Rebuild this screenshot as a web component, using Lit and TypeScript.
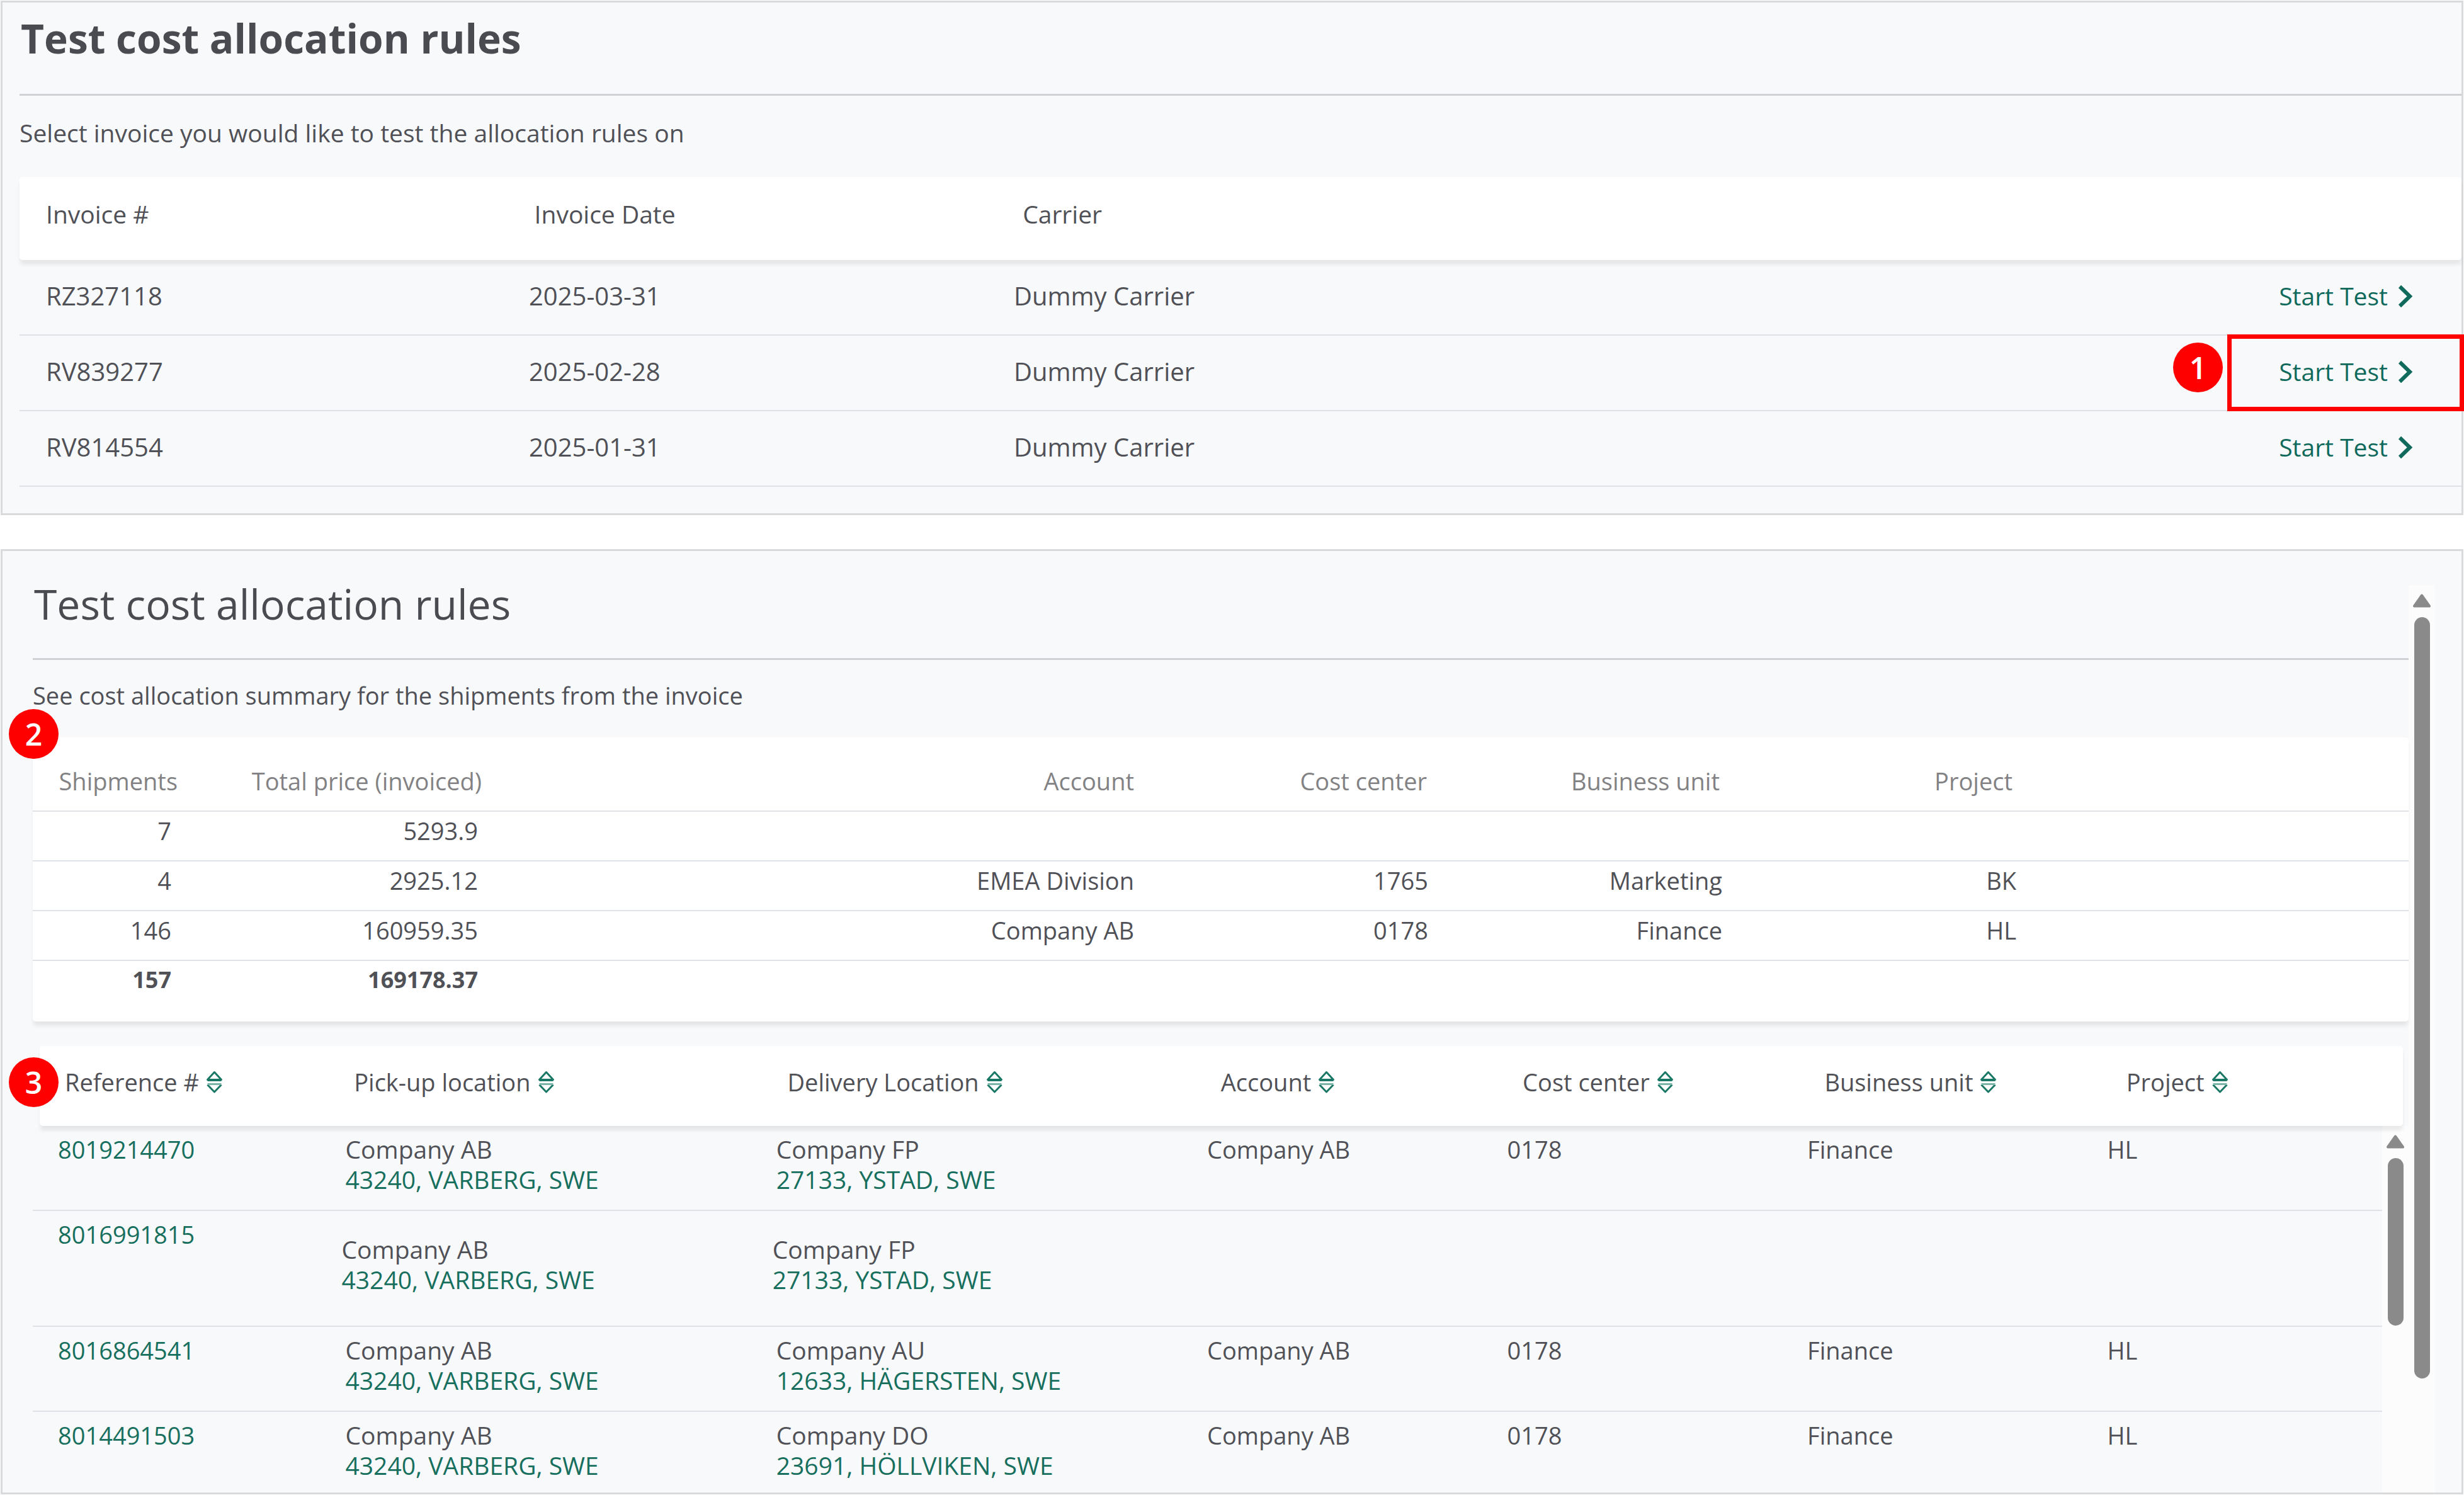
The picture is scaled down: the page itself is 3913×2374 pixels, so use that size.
import { LitElement, html, css, svg, nothing } from "lit";
import { customElement, property } from "lit/decorators.js";

interface Invoice {
  id: string;
  date: string;
  carrier: string;
  step?: number;
}

interface Place {
  company: string;
  address: string;
}

interface Shipment {
  reference: string;
  pickup: Place;
  delivery: Place;
  dimensions: [string, string, string, string];
  tall?: boolean;
}

const INVOICES: Invoice[] = [
  { id: "RZ327118", date: "2025-03-31", carrier: "Dummy Carrier" },
  { id: "RV839277", date: "2025-02-28", carrier: "Dummy Carrier", step: 1 },
  { id: "RV814554", date: "2025-01-31", carrier: "Dummy Carrier" },
];

const SUMMARY_HEADERS = ["Shipments", "Total price (invoiced)", "Account", "Cost center", "Business unit", "Project"];

const SUMMARY: string[][] = [
  ["7", "5293.9", "", "", "", ""],
  ["4", "2925.12", "EMEA Division", "1765", "Marketing", "BK"],
  ["146", "160959.35", "Company AB", "0178", "Finance", "HL"],
  ["157", "169178.37", "", "", "", ""],
];

const DETAIL_HEADERS = [
  "Reference #",
  "Pick-up location",
  "Delivery Location",
  "Account",
  "Cost center",
  "Business unit",
  "Project",
];

const VARBERG: Place = { company: "Company AB", address: "43240, VARBERG, SWE" };
const YSTAD: Place = { company: "Company FP", address: "27133, YSTAD, SWE" };

const SHIPMENTS: Shipment[] = [
  {
    reference: "8019214470",
    pickup: VARBERG,
    delivery: YSTAD,
    dimensions: ["Company AB", "0178", "Finance", "HL"],
  },
  {
    reference: "8016991815",
    pickup: VARBERG,
    delivery: YSTAD,
    dimensions: ["", "", "", ""],
    tall: true,
  },
  {
    reference: "8016864541",
    pickup: VARBERG,
    delivery: { company: "Company AU", address: "12633, HÄGERSTEN, SWE" },
    dimensions: ["Company AB", "0178", "Finance", "HL"],
  },
  {
    reference: "8014491503",
    pickup: VARBERG,
    delivery: { company: "Company DO", address: "23691, HÖLLVIKEN, SWE" },
    dimensions: ["Company AB", "0178", "Finance", "HL"],
  },
];

@customElement("step-badge")
export class StepBadge extends LitElement {
  @property({ type: Number }) step = 1;

  static styles = css`
    :host {
      display: flex;
      align-items: center;
      justify-content: center;
      box-sizing: border-box;
      width: 79px;
      height: 79px;
      border-radius: 50%;
      background: #ff0000;
      color: #ffffff;
      font: 600 48px/52px "Open Sans", "Noto Sans", sans-serif;
    }
  `;

  render() {
    return html`${this.step}`;
  }
}

@customElement("scroll-track")
export class ScrollTrack extends LitElement {
  /** Length of the thumb as a percentage of the rail below the arrow. */
  @property({ type: Number }) extent = 50;

  static styles = css`
    :host {
      display: flex;
      flex-direction: column;
      align-items: center;
      box-sizing: border-box;
      width: 42px;
      padding-top: 14px;
      background: #fcfcfc;
    }
    .arrow {
      display: block;
      flex: none;
      width: 28px;
      height: 22px;
      margin-bottom: 15px;
      fill: #8a8a8a;
      stroke: #8a8a8a;
      stroke-width: 4;
      stroke-linejoin: round;
    }
    .rail {
      flex: 1;
      width: 25px;
    }
    .thumb {
      border-radius: 13px;
      background: #8a8a8a;
    }
  `;

  render() {
    return html`
      <svg class="arrow" viewBox="0 0 28 22" aria-hidden="true"><path d="M14 2.5 26 19.5H2Z" /></svg>
      <div class="rail"><div class="thumb" style="height:${this.extent}%"></div></div>
    `;
  }
}

const chevron = svg`<path d="M3 3 19 18.5 3 34" />`;

@customElement("app-root")
export class AppRoot extends LitElement {
  static styles = css`
    :host {
      display: block;
      background: #ffffff;
      color: #505157;
      font: 38px/52px "Open Sans", "Noto Sans", sans-serif;
    }
    * {
      box-sizing: border-box;
    }
    .page {
      display: flex;
      flex-direction: column;
      gap: 54px;
      padding: 1px;
    }
    .panel {
      border: 3px solid #d8dadb;
      background: #f8f9fb;
    }
    .title {
      margin: 0;
      padding-left: 2px;
      border-bottom: 3px solid #cfd1d4;
      color: #4a4b50;
      line-height: 80px;
    }
    .intro {
      margin: 0;
    }
    table {
      display: block;
    }
    thead,
    tbody {
      display: block;
    }
    tr {
      display: grid;
    }
    th,
    td {
      display: block;
      padding: 0;
      min-width: 0;
      font-weight: 400;
      text-align: left;
      white-space: nowrap;
    }
    a {
      color: #176f5e;
      text-decoration: none;
    }
    button {
      display: flex;
      align-items: center;
      margin: 0;
      padding: 0;
      border: 0;
      background: none;
      color: inherit;
      font: inherit;
      cursor: pointer;
    }
    .raised {
      border-radius: 5px;
      background: #ffffff;
      box-shadow: 0 8px 6px -1px rgba(0, 0, 0, 0.08);
    }

    .invoices {
      padding: 17px 0 42px 27px;
    }
    .invoices .title {
      padding-bottom: 48px;
      font-size: 64px;
      font-weight: 700;
    }
    .invoices .intro {
      padding: 33px 0 44px;
      font-size: 39px;
    }
    .invoice-table {
      font-size: 40px;
    }
    .invoice-table thead tr {
      grid-template-columns: repeat(5, 1fr);
      align-items: center;
      height: 132px;
      padding-bottom: 14px;
      font-size: 39px;
    }
    .invoice-table tbody tr {
      position: relative;
      grid-template-columns: 767fr 770fr 2341fr;
      align-items: center;
      height: 120px;
      padding-bottom: 4px;
      border-bottom: 2px solid #dfe1e6;
    }
    .invoice-table th,
    .invoice-table td {
      padding-left: 42px;
    }
    .carrier-cell {
      display: flex;
      justify-content: space-between;
      padding-right: 77px;
    }
    .start {
      gap: 16px;
      color: #0f6a5b;
      font-size: 39px;
    }
    .chevron {
      width: 24px;
      height: 37px;
      fill: none;
      stroke: currentColor;
      stroke-width: 6;
    }
    .callout {
      position: absolute;
      top: -2px;
      right: -4px;
      width: 376px;
      height: 122px;
      border: 7px solid #ff0000;
      pointer-events: none;
    }
    .callout-badge {
      position: absolute;
      top: 11px;
      right: 379px;
    }

    .results {
      display: flex;
      align-items: stretch;
      padding-right: 42px;
    }
    .results-main {
      flex: 1;
      min-width: 0;
      padding: 43px 0 0 48px;
    }
    .results .title {
      padding-bottom: 47px;
      font-size: 66px;
      font-weight: 400;
    }
    .results .intro {
      padding: 30px 0 41px;
    }
    .page-scroll {
      margin-top: 54px;
    }
    .anchor {
      position: relative;
    }
    .summary-badge {
      position: absolute;
      top: -45px;
      left: -38px;
    }
    .detail-badge {
      position: absolute;
      top: 18px;
      left: -38px;
    }

    .summary tr {
      padding: 4px 0 21px;
      border-bottom: 2px solid #dfe3e8;
      grid-template-columns: 220fr 487fr 1042fr 467fr 467fr 467fr 623fr;
    }
    .summary thead tr {
      padding: 43px 0 21px;
      color: #828284;
      grid-template-columns: 230fr 483fr 1036fr 465fr 465fr 465fr 629fr;
    }
    .summary tbody tr:last-child {
      padding-bottom: 40px;
      border-bottom: 0;
    }
    .summary tbody tr:last-child td {
      font-size: 36px;
      font-weight: 700;
    }
    .summary th,
    .summary td {
      text-align: right;
    }

    .detail {
      display: grid;
      grid-template-columns: 1fr 42px;
      margin-top: 39px;
    }
    .detail table {
      display: contents;
    }
    .detail tr {
      grid-template-columns: 457fr 685fr 685fr 477fr 477fr 477fr 477fr;
    }
    .detail thead {
      position: relative;
      grid-column: 1 / -1;
      margin: 0 9px 0 11px;
      padding: 31px 0 44px;
    }
    .detail th,
    .detail td {
      padding-left: 40px;
    }
    .detail tbody {
      line-height: 48px;
    }
    .detail tbody tr {
      padding: 13px 0 24px;
      border-bottom: 2px solid #dfe1e6;
    }
    .detail tbody tr:last-child {
      padding-bottom: 19px;
      border-bottom: 0;
    }
    .detail tbody .tall {
      padding-bottom: 49px;
    }
    .tall .place {
      margin: 24px 0 0 -6px;
    }
    .place {
      display: flex;
      flex-direction: column;
      align-items: flex-start;
      font-size: 39px;
    }
    .sort {
      gap: 11px;
    }
    .sort-icon {
      width: 27px;
      height: 36px;
      fill: none;
      stroke: #1b7866;
      stroke-width: 3;
      stroke-linejoin: round;
    }
    .sort-icon .faint {
      stroke: #7db4a8;
    }
  `;

  private renderInvoices() {
    return html`
      <section class="panel invoices">
        <h1 class="title">Test cost allocation rules</h1>
        <p class="intro">Select invoice you would like to test the allocation rules on</p>
        <table class="invoice-table">
          <thead class="raised">
            <tr>
              <th scope="col">Invoice #</th>
              <th scope="col">Invoice Date</th>
              <th scope="col">Carrier</th>
            </tr>
          </thead>
          <tbody>
            ${INVOICES.map(
              (invoice) => html`
                <tr>
                  <td>${invoice.id}</td>
                  <td>${invoice.date}</td>
                  <td class="carrier-cell">
                    <span>${invoice.carrier}</span>
                    <button class="start" type="button">
                      Start Test
                      <svg class="chevron" viewBox="0 0 24 37" aria-hidden="true">${chevron}</svg>
                    </button>
                    ${invoice.step
                      ? html`
                          <div class="callout"></div>
                          <step-badge class="callout-badge" .step=${invoice.step}></step-badge>
                        `
                      : nothing}
                  </td>
                </tr>
              `
            )}
          </tbody>
        </table>
      </section>
    `;
  }

  private renderSummary() {
    return html`
      <div class="anchor">
        <table class="summary raised">
          <thead>
            <tr>
              ${SUMMARY_HEADERS.map((label) => html`<th scope="col">${label}</th>`)}
            </tr>
          </thead>
          <tbody>
            ${SUMMARY.map((row) => html`<tr>${row.map((value) => html`<td>${value}</td>`)}</tr>`)}
          </tbody>
        </table>
        <step-badge class="summary-badge" .step=${2}></step-badge>
      </div>
    `;
  }

  private renderPlace(place: Place) {
    return html`<div class="place"><span>${place.company}</span><a href="#">${place.address}</a></div>`;
  }

  private renderDetail() {
    return html`
      <div class="anchor">
        <div class="detail">
          <table>
            <thead class="raised">
              <tr>
                ${DETAIL_HEADERS.map(
                  (label) => html`
                    <th scope="col">
                      <button class="sort" type="button">
                        ${label}
                        <svg class="sort-icon" viewBox="0 0 27 36" aria-hidden="true">
                          <path d="M13.5 2.5 24.5 14.5H2.5Z" />
                          <path d="M2.5 15.5H24.5" />
                          <path d="M2.5 22.5 13.5 34 24.5 22.5" />
                          <path class="faint" d="M2.5 21.5H24.5" />
                        </svg>
                      </button>
                    </th>
                  `
                )}
              </tr>
            </thead>
            <tbody>
              ${SHIPMENTS.map(
                (shipment) => html`
                  <tr class=${shipment.tall ? "tall" : "regular"}>
                    <td><a href="#">${shipment.reference}</a></td>
                    <td>${this.renderPlace(shipment.pickup)}</td>
                    <td>${this.renderPlace(shipment.delivery)}</td>
                    ${shipment.dimensions.map((value) => html`<td>${value}</td>`)}
                  </tr>
                `
              )}
            </tbody>
          </table>
          <scroll-track .extent=${50}></scroll-track>
        </div>
        <step-badge class="detail-badge" .step=${3}></step-badge>
      </div>
    `;
  }

  render() {
    return html`
      <main class="page">
        ${this.renderInvoices()}
        <section class="panel results">
          <div class="results-main">
            <h2 class="title">Test cost allocation rules</h2>
            <p class="intro">See cost allocation summary for the shipments from the invoice</p>
            ${this.renderSummary()} ${this.renderDetail()}
          </div>
          <scroll-track class="page-scroll" .extent=${87}></scroll-track>
        </section>
      </main>
    `;
  }
}
